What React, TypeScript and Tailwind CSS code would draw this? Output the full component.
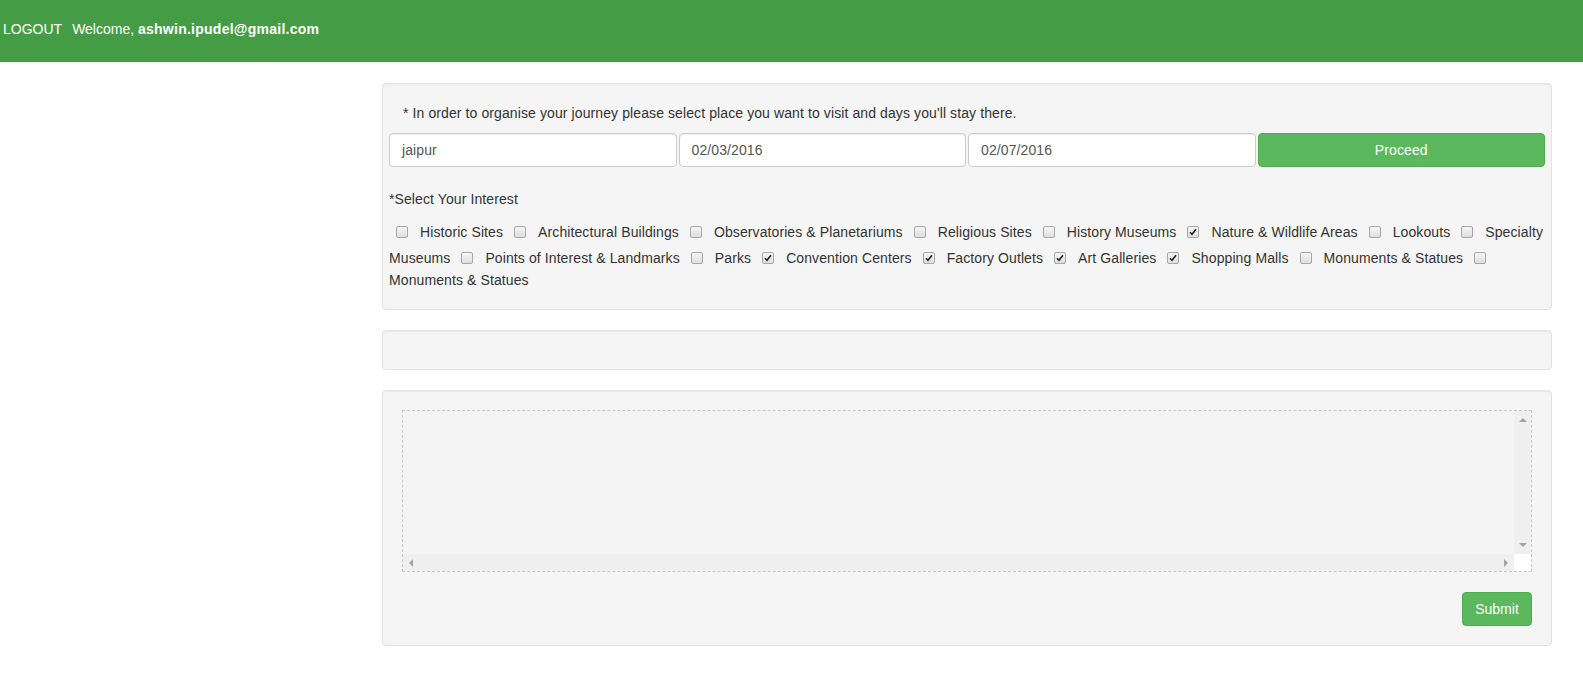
import React from "react";

type Interest = { label: string; checked?: boolean };

// line 1 ends with "Specialty", line 2 carries "Museums" and the rest
const row1: Interest[] = [
  { label: "Historic Sites" },
  { label: "Architectural Buildings" },
  { label: "Observatories & Planetariums" },
  { label: "Religious Sites" },
  { label: "History Museums" },
  { label: "Nature & Wildlife Areas", checked: true },
  { label: "Lookouts" },
  { label: "Specialty" },
];

const row2: Interest[] = [
  { label: "Points of Interest & Landmarks" },
  { label: "Parks" },
  { label: "Convention Centers", checked: true },
  { label: "Factory Outlets", checked: true },
  { label: "Art Galleries", checked: true },
  { label: "Shopping Malls", checked: true },
  { label: "Monuments & Statues" },
];

function Box({ checked, first }: { checked?: boolean; first?: boolean }) {
  return (
    <span
      className={`${first ? "ml-[7px]" : "ml-[11px]"} inline-flex h-[12px] w-[12px] shrink-0 items-center justify-center rounded-[2px] border border-[#a8a8a8] bg-gradient-to-b from-[#f6f6f6] to-[#dedede]`}
    >
      {checked && (
        <svg width="8" height="8" viewBox="0 0 8 8">
          <path d="M1 4.2 L3 6.3 L7 1.2" fill="none" stroke="#222" strokeWidth="1.6" />
        </svg>
      )}
    </span>
  );
}

function Item({ it, first }: { it: Interest; first?: boolean }) {
  return (
    <>
      <Box checked={it.checked} first={first} />
      <span className="ml-[12px] whitespace-nowrap">{it.label}</span>
    </>
  );
}

function Field({ value }: { value: string }) {
  return (
    <div className="flex h-[34px] items-center rounded-[4px] border border-[#ccc] bg-white px-[12px] text-[#555] shadow-[inset_0_1px_1px_rgba(0,0,0,0.075)]">
      {value}
    </div>
  );
}

const well =
  "rounded-[4px] border border-[#e3e3e3] bg-[#f5f5f5] shadow-[inset_0_1px_1px_rgba(0,0,0,0.05)]";

function Arrow({ dir }: { dir: "up" | "down" | "left" | "right" }) {
  const pts = {
    up: "0,4 4,0 8,4",
    down: "0,0 8,0 4,4",
    left: "4,0 4,8 0,4",
    right: "0,0 4,4 0,8",
  }[dir];
  const vert = dir === "up" || dir === "down";
  return (
    <svg width={vert ? 8 : 4} height={vert ? 4 : 8} viewBox={vert ? "0 0 8 4" : "0 0 4 8"}>
      <polygon points={pts} fill="#a3a3a3" />
    </svg>
  );
}

export default function App() {
  return (
    <div className="min-h-screen bg-white text-[14px] leading-[20px] tracking-[0.1px] text-[#333] [font-family:'Liberation_Sans',Arial,sans-serif]">
      {/* barra superior */}
      <div className="h-[62px] bg-[#449d44] pl-[3px] pt-[19px] text-white">
        <span className="tracking-normal">LOGOUT</span>
        <span className="ml-[10px] tracking-normal">Welcome, </span>
        <span className="font-bold tracking-[0.25px]">ashwin.ipudel@gmail.com</span>
      </div>

      <div className="ml-[382px] w-[1170px] pt-[21px]">
        {/* busqueda */}
        <div className={`${well} pb-[19px] pt-[19px]`}>
          <p className="pl-[20px]">
            * In order to organise your journey please select place you want to visit and days you'll stay there.
          </p>
          <div className="mt-[10px] grid grid-cols-4 gap-[2px] px-[6px]">
            <Field value="jaipur" />
            <Field value="02/03/2016" />
            <Field value="02/07/2016" />
            <button
              type="button"
              className="h-[34px] rounded-[4px] border border-[#4cae4c] bg-[#5cb85c] text-white"
            >
              Proceed
            </button>
          </div>

          <div className="pl-[6px]">
            <p className="mt-[22px]">*Select Your Interest</p>
            <div className="mt-[9px] flex h-[27px] items-center">
              {row1.map((it, i) => (
                <Item key={i} it={it} first={i === 0} />
              ))}
            </div>
            <div className="flex h-[25px] items-center">
              <span>Museums</span>
              {row2.map((it, i) => (
                <Item key={i} it={it} />
              ))}
              <Box />
            </div>
            <div className="flex h-[20px] items-center">
              <span>Monuments &amp; Statues</span>
            </div>
          </div>
        </div>

        {/* vacio */}
        <div className={`${well} mt-[20px] h-[40px]`} />

        {/* mapa */}
        <div className={`${well} mt-[20px] p-[19px]`}>
          <div className="flex h-[162px] flex-col border border-dashed border-[#c8c8c8] bg-[#f4f4f4]">
            <div className="flex flex-1">
              <div className="flex-1" />
              <div className="flex w-[17px] flex-col items-center justify-between bg-[#efefef] pb-[7px] pt-[7px]">
                <Arrow dir="up" />
                <Arrow dir="down" />
              </div>
            </div>
            <div className="flex h-[17px]">
              <div className="flex flex-1 items-center justify-between bg-[#efefef] px-[6px]">
                <Arrow dir="left" />
                <Arrow dir="right" />
              </div>
              <div className="w-[17px] bg-white" />
            </div>
          </div>
          <div className="mt-[20px] flex justify-end">
            <button
              type="button"
              className="h-[34px] w-[70px] rounded-[4px] border border-[#4cae4c] bg-[#5cb85c] tracking-normal text-white"
            >
              Submit
            </button>
          </div>
        </div>
      </div>
    </div>
  );
}
